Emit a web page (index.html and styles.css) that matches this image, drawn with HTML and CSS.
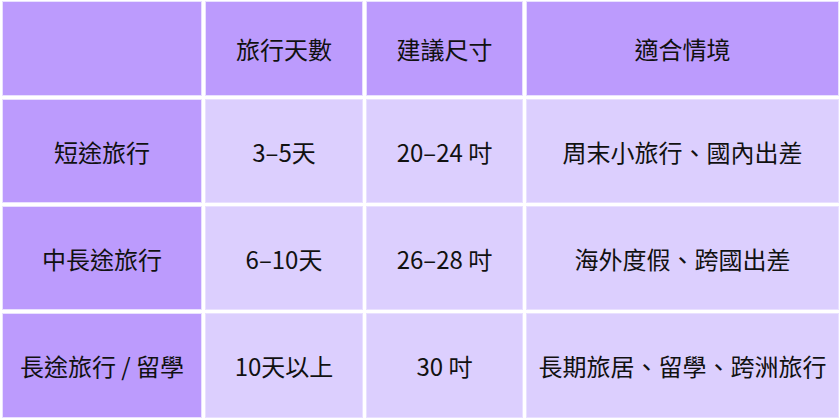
FILE: index.html
```html
<!DOCTYPE html>
<html lang="zh-Hant">
<head>
<meta charset="utf-8">
<title>行李箱尺寸建議</title>
<link rel="stylesheet" href="styles.css">
</head>
<body>
<div class="table">
  <div class="cell head"></div>
  <div class="cell head">旅行天數</div>
  <div class="cell head">建議尺寸</div>
  <div class="cell head">適合情境</div>

  <div class="cell head">短途旅行</div>
  <div class="cell">3–5天</div>
  <div class="cell">20–24 吋</div>
  <div class="cell">周末小旅行、國內出差</div>

  <div class="cell head">中長途旅行</div>
  <div class="cell">6–10天</div>
  <div class="cell">26–28 吋</div>
  <div class="cell">海外度假、跨國出差</div>

  <div class="cell head">長途旅行 / 留學</div>
  <div class="cell">10天以上</div>
  <div class="cell">30 吋</div>
  <div class="cell">長期旅居、留學、跨洲旅行</div>
</div>
</body>
</html>
```
FILE: styles.css
```css
html, body {
  margin: 0;
  padding: 0;
  background: #ffffff;
}
body {
  width: 840px;
  height: 420px;
  overflow: hidden;
}
.table {
  display: grid;
  grid-template-columns: 198px 156px 155px 311px;
  grid-template-rows: 93px 102px 102px 103px;
  gap: 5px;
  padding: 2px 2px 2px 2px;
  margin-left: 1px;
  font-family: "Noto Sans CJK TC", "Noto Sans", sans-serif;
  font-size: 24px;
  color: #111111;
}
.cell {
  display: flex;
  align-items: center;
  justify-content: center;
  background: #dccffe;
  box-shadow: 0 0 0 1px #e9e1ff;
  white-space: nowrap;
}
.cell.head {
  background: #bc9bfd;
}
```
